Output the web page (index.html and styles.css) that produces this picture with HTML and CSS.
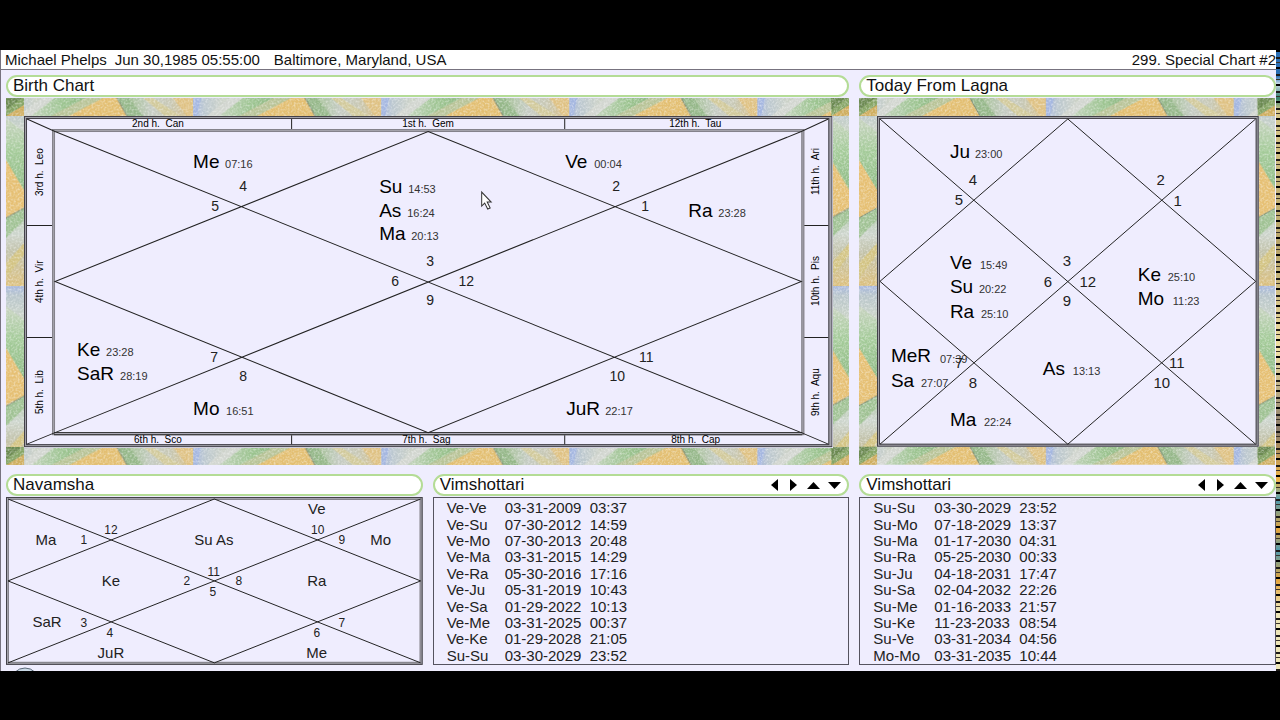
FILE: index.html
```html
<!DOCTYPE html>
<html lang="en">
<head>
<meta charset="utf-8">
<title>Michael Phelps - Birth Chart</title>
<link rel="stylesheet" href="styles.css">
</head>
<body>
<div class="app">
  <div class="main">
    <header class="topbar">
      <span>Michael Phelps</span>
      <span>Jun 30,1985 05:55:00</span>
      <span class="place">Baltimore, Maryland, USA</span>
      <span class="chart-no">299. Special Chart #2</span>
    </header>
    <main class="grid">
      <section class="panel wide">
        <h2 class="title">Birth Chart</h2>
        <svg class="chart" viewBox="6 98 843 367" role="img" aria-label="Birth chart">
          <defs>
            <linearGradient id="gh"><stop offset="0" stop-color="#a9b9de"/><stop offset=".06" stop-color="#bcc8d0"/><stop offset=".16" stop-color="#ccd2c8"/><stop offset=".3" stop-color="#a8c598"/><stop offset=".44" stop-color="#c2ca9a"/><stop offset=".64" stop-color="#a2c191"/><stop offset=".78" stop-color="#c6ccc4"/><stop offset=".88" stop-color="#c8c8b4"/><stop offset="1" stop-color="#dcbf80"/></linearGradient>
            <linearGradient id="gv" x2="0" y2="1"><stop offset="0" stop-color="#a9b9de"/><stop offset=".05" stop-color="#b9c6cc"/><stop offset=".17" stop-color="#cbd4c8"/><stop offset=".32" stop-color="#9bc08e"/><stop offset=".6" stop-color="#abc4a2"/><stop offset=".72" stop-color="#ced6ce"/><stop offset=".82" stop-color="#c2c2aa"/><stop offset="1" stop-color="#dcc07e"/></linearGradient>
            <linearGradient id="green" x2="0" y2="1"><stop offset="0" stop-color="#c9d4c2"/><stop offset=".45" stop-color="#a6cc9b"/><stop offset="1" stop-color="#8fbb86"/></linearGradient>
            <linearGradient id="band"><stop offset="0" stop-color="#c3d3bc"/><stop offset=".5" stop-color="#9cc490"/><stop offset="1" stop-color="#8ab27f"/></linearGradient>
            <filter id="grain" x="0" y="0" width="1" height="1" color-interpolation-filters="sRGB">
              <feTurbulence type="fractalNoise" baseFrequency=".5" numOctaves="2" result="n"/>
              <feColorMatrix in="n" type="matrix" values="0 0 0 0 1  0 0 0 0 1  0 0 0 0 1  1 0 0 0 -.4" result="w"/>
              <feComposite in="w" in2="SourceGraphic" operator="in" result="c"/>
              <feMerge><feMergeNode in="SourceGraphic"/><feMergeNode in="c"/></feMerge>
            </filter>
            <pattern id="tile-h" patternUnits="userSpaceOnUse" x="5" y="98" width="188" height="18">
              <rect width="188" height="18" fill="url(#gh)"/>
              <path d="M0 0H8L4 18H0Z" fill="#a5b7e0"/>
              <path d="M14 18 36 0H50L26 18Z" fill="#d2d6d0"/>
              <path d="M26 18 50 0H92L46 18Z" fill="url(#band)"/>
              <path d="M46 18 80 0H98L64 18Z" fill="#b9c498"/>
              <path d="M64 18 98 0H112L122 18Z" fill="#e3bf72"/>
              <path d="M112 0 122 18H138L124 0Z" fill="#96b88a"/>
              <path d="M112 0 122 18" stroke="#7a8876"/>
              <path d="M138 0 160 18H176L148 0Z" fill="#d2ca9c"/>
              <path d="M168 0 182 18H188V0Z" fill="#dfc284"/>
            </pattern>
            <pattern id="tile-v" patternUnits="userSpaceOnUse" x="6" y="98" width="18" height="188">
              <rect width="18" height="188" fill="url(#gv)"/>
              <path d="M0 20 18 34V92L0 62Z" fill="url(#green)"/>
              <path d="M0 62 18 92V110L0 120Z" fill="#e6c074"/>
              <path d="M0 120 18 110V122L0 140Z" fill="#a0c294"/>
              <path d="M0 120 18 110" stroke="#7f8e78"/>
              <path d="M0 165 18 145V157L0 180Z" fill="#d3c484"/>
            </pattern>
            <g id="corner"><path d="M6 98H24V116H6Z" fill="#86a566"/><path d="M6 116 24 105V116Z" fill="#cfae60"/><path d="M6 98H22L6 110Z" fill="#6c8a52"/></g>
            <g id="sides"><rect x="6" y="98" width="18" height="367" fill="url(#tile-v)"/></g>
          </defs>
          <g filter="url(#grain)">
            <use href="#sides"/><use href="#sides" x="825"/>
            <rect x="6" y="98" width="843" height="18" fill="url(#tile-h)"/>
            <g transform="translate(0 349)"><rect x="6" y="98" width="843" height="18" fill="url(#tile-h)"/></g>
            <use href="#corner"/><use href="#corner" x="825"/><use href="#corner" y="349"/><use href="#corner" x="825" y="349"/>
          </g>
          <rect class="field" x="24" y="116" width="808" height="331"/>
          <rect class="bevel" x="25.5" y="117.5" width="804" height="328"/>
          <rect class="edge" x="24.5" y="116.5" width="807" height="330"/>
          <rect class="edge" x="26.5" y="118.5" width="802" height="326"/>
          <rect class="bevel" x="53.5" y="130.5" width="749" height="303"/>
          <rect class="edge soft" x="54.5" y="131.5" width="747" height="301"/>
          <rect class="edge soft" x="52.5" y="129.5" width="751" height="305"/>
          <path class="gap" d="M55 433.5H802"/>
          <path class="line" d="M54 432.5H802M54 434.5H802"/>
          <path class="line" d="M291.5 119V129M564.5 119V129M291.5 435V444M564.5 435V444M27 225.5H52M27 337.5H52M804 225.5H828M804 337.5H828"/>
          <path class="line" d="M27 119 55 131.500 801 432.500 828 444M828 119 801 131.500 55 432.500 27 444M428 131.500 801 281.500 428 432.500 55 281.500Z"/>
          <g class="house">
            <text x="132" y="127">2nd h.&nbsp; Can</text><text x="402" y="127">1st h.&nbsp; Gem</text><text x="669" y="127">12th h.&nbsp; Tau</text>
            <text x="134" y="443">6th h.&nbsp; Sco</text><text x="402" y="443">7th h.&nbsp; Sag</text><text x="671" y="443">8th h.&nbsp; Cap</text>
            <text transform="translate(43 196) rotate(-90)">3rd h.&nbsp; Leo</text><text transform="translate(43 303) rotate(-90)">4th h.&nbsp; Vir</text><text transform="translate(43 414) rotate(-90)">5th h.&nbsp; Lib</text>
            <text transform="translate(819 195) rotate(-90)">11th h.&nbsp; Ari</text><text transform="translate(819 306) rotate(-90)">10th h.&nbsp; Pis</text><text transform="translate(819 416) rotate(-90)">9th h.&nbsp; Aqu</text>
          </g>
          <g class="planet">
            <text x="193" y="168">Me</text><text x="565" y="168">Ve</text><text x="379" y="193">Su</text><text x="379" y="217">As</text><text x="379" y="240">Ma</text><text x="688" y="217">Ra</text>
            <text x="77" y="356">Ke</text><text x="77" y="380">SaR</text><text x="193" y="415">Mo</text><text x="566" y="415">JuR</text>
          </g>
          <g class="degree">
            <text x="225" y="168">07:16</text><text x="594" y="168">00:04</text><text x="408" y="193">14:53</text><text x="407" y="217">16:24</text><text x="411" y="240">20:13</text><text x="718" y="217">23:28</text>
            <text x="106" y="356">23:28</text><text x="120" y="380">28:19</text><text x="226" y="415">16:51</text><text x="605" y="415">22:17</text>
          </g>
          <g class="sign">
            <text x="243" y="191">4</text><text x="215" y="211">5</text><text x="616" y="191">2</text><text x="645" y="211">1</text><text x="430" y="266">3</text><text x="395" y="286">6</text><text x="466" y="286">12</text><text x="430" y="305">9</text><text x="214" y="362">7</text><text x="243" y="381">8</text><text x="646" y="362">11</text><text x="617" y="381">10</text>
          </g>
          <path class="cursor" d="M481.500 192V206L484.500 203 487.500 209 490 208 487 202H491Z"/>
        </svg>
      </section>

      <section class="panel">
        <h2 class="title">Today From Lagna</h2>
        <svg class="chart" viewBox="859 98 417 367" role="img" aria-label="Today from Lagna chart">
          <g filter="url(#grain)">
            <use href="#sides" x="853"/><use href="#sides" x="1252"/>
            <g transform="translate(853 0)"><rect x="6" y="98" width="417" height="18" fill="url(#tile-h)"/></g>
            <g transform="translate(853 349)"><rect x="6" y="98" width="417" height="18" fill="url(#tile-h)"/></g>
            <use href="#corner" x="853"/><use href="#corner" x="1252"/><use href="#corner" x="853" y="349"/><use href="#corner" x="1252" y="349"/>
          </g>
          <rect class="field" x="877" y="116" width="382" height="331"/>
          <rect class="bevel" x="878.5" y="117.5" width="379" height="328"/>
          <rect class="edge" x="877.5" y="116.5" width="381" height="330"/>
          <rect class="edge" x="879.5" y="118.5" width="377" height="326"/>
          <path class="line" d="M880 119 1256 444.500M1256 119 880 444.500M1068 119 1256 281.500 1068 444.500 880 281.500Z"/>
          <g class="planet">
            <text x="950" y="158">Ju</text><text x="950" y="269">Ve</text><text x="950" y="293">Su</text><text x="950" y="318">Ra</text><text x="1138" y="281">Ke</text><text x="1138" y="305">Mo</text><text x="891" y="362">MeR</text><text x="891" y="387">Sa</text><text x="1043" y="375">As</text><text x="950" y="426">Ma</text>
          </g>
          <g class="degree">
            <text x="975" y="158">23:00</text><text x="980" y="269">15:49</text><text x="979" y="293">20:22</text><text x="981" y="318">25:10</text><text x="1168" y="281">25:10</text><text x="1173" y="305">11:23</text><text x="940" y="363">07:39</text><text x="921" y="387">27:07</text><text x="1073" y="375">13:13</text><text x="984" y="426">22:24</text>
          </g>
          <g class="sign large">
            <text x="973" y="185">4</text><text x="959" y="205">5</text><text x="1161" y="185">2</text><text x="1178" y="206">1</text><text x="1067" y="266">3</text><text x="1048" y="287">6</text><text x="1088" y="287">12</text><text x="1067" y="306">9</text><text x="959" y="368">7</text><text x="973" y="388">8</text><text x="1177" y="368">11</text><text x="1162" y="388">10</text>
          </g>
        </svg>
      </section>

      <section class="panel">
        <h2 class="title">Navamsha</h2>
        <svg class="chart" viewBox="6 497 417 168" role="img" aria-label="Navamsha chart">
          <rect class="bevel" x="7.5" y="498.500" width="414" height="165"/>
          <rect class="edge" x="6.5" y="497.500" width="416" height="167"/>
          <rect class="edge soft" x="8.5" y="499.500" width="412" height="163"/>
          <path class="line" d="M8 499 421 663M421 499 8 663M214.500 499 421 581 214.500 663 8 581Z"/>
          <g class="planet small">
            <text x="317" y="514">Ve</text><text x="46" y="545">Ma</text><text x="214" y="545">Su As</text><text x="381" y="545">Mo</text><text x="111" y="586">Ke</text><text x="317" y="586">Ra</text><text x="47" y="627">SaR</text><text x="111" y="658">JuR</text><text x="317" y="658">Me</text>
          </g>
          <g class="sign small">
            <text x="111" y="534">12</text><text x="84" y="544">1</text><text x="318" y="534">10</text><text x="342" y="544">9</text><text x="214" y="576">11</text><text x="187" y="585">2</text><text x="239" y="585">8</text><text x="213" y="596">5</text><text x="84" y="627">3</text><text x="110" y="637">4</text><text x="317" y="637">6</text><text x="342" y="627">7</text>
          </g>
        </svg>
      </section>

      <section class="panel">
        <div class="title"><h2>Vimshottari</h2>
          <div class="nav">
            <button aria-label="Previous"><svg width="7" height="12"><path d="M7 0V12L0 6Z"/></svg></button>
            <button aria-label="Next"><svg width="7" height="12"><path d="M0 0V12L7 6Z"/></svg></button>
            <button aria-label="Up"><svg width="13" height="7"><path d="M0 7H13L6.500 0Z"/></svg></button>
            <button aria-label="Down"><svg width="13" height="7"><path d="M0 0H13L6.500 7Z"/></svg></button>
          </div>
        </div>
        <div class="list">
          <table>
            <tr><td>Ve-Ve</td><td>03-31-2009</td><td>03:37</td></tr>
            <tr><td>Ve-Su</td><td>07-30-2012</td><td>14:59</td></tr>
            <tr><td>Ve-Mo</td><td>07-30-2013</td><td>20:48</td></tr>
            <tr><td>Ve-Ma</td><td>03-31-2015</td><td>14:29</td></tr>
            <tr><td>Ve-Ra</td><td>05-30-2016</td><td>17:16</td></tr>
            <tr><td>Ve-Ju</td><td>05-31-2019</td><td>10:43</td></tr>
            <tr><td>Ve-Sa</td><td>01-29-2022</td><td>10:13</td></tr>
            <tr><td>Ve-Me</td><td>03-31-2025</td><td>00:37</td></tr>
            <tr><td>Ve-Ke</td><td>01-29-2028</td><td>21:05</td></tr>
            <tr><td>Su-Su</td><td>03-30-2029</td><td>23:52</td></tr>
          </table>
        </div>
      </section>

      <section class="panel">
        <div class="title"><h2>Vimshottari</h2>
          <div class="nav">
            <button aria-label="Previous"><svg width="7" height="12"><path d="M7 0V12L0 6Z"/></svg></button>
            <button aria-label="Next"><svg width="7" height="12"><path d="M0 0V12L7 6Z"/></svg></button>
            <button aria-label="Up"><svg width="13" height="7"><path d="M0 7H13L6.500 0Z"/></svg></button>
            <button aria-label="Down"><svg width="13" height="7"><path d="M0 0H13L6.500 7Z"/></svg></button>
          </div>
        </div>
        <div class="list later">
          <table>
            <tr><td>Su-Su</td><td>03-30-2029</td><td>23:52</td></tr>
            <tr><td>Su-Mo</td><td>07-18-2029</td><td>13:37</td></tr>
            <tr><td>Su-Ma</td><td>01-17-2030</td><td>04:31</td></tr>
            <tr><td>Su-Ra</td><td>05-25-2030</td><td>00:33</td></tr>
            <tr><td>Su-Ju</td><td>04-18-2031</td><td>17:47</td></tr>
            <tr><td>Su-Sa</td><td>02-04-2032</td><td>22:26</td></tr>
            <tr><td>Su-Me</td><td>01-16-2033</td><td>21:57</td></tr>
            <tr><td>Su-Ke</td><td>11-23-2033</td><td>08:54</td></tr>
            <tr><td>Su-Ve</td><td>03-31-2034</td><td>04:56</td></tr>
            <tr><td>Mo-Mo</td><td>03-31-2035</td><td>10:44</td></tr>
          </table>
        </div>
      </section>
    </main>
    <footer class="foot"><svg width="30" height="6"><circle cx="15" cy="17" r="14" fill="#c9d9e6" stroke="#5b6878" stroke-width="1"/></svg></footer>
  </div>
  <div class="edge-strip"></div>
</div>
</body>
</html>
```
FILE: styles.css
```css
* { box-sizing: border-box; }
body {
  margin: 0;
  min-height: 100vh;
  padding: 50px 0 48px;
  background: #000;
  color: #111;
  font-family: "Liberation Sans", Arial, sans-serif;
  font-size: 15px;
}
.app { display: flex; background: #efedfe; }
.main { flex: 1; min-width: 0; border-left: 1px solid #77737f; }
.topbar {
  display: flex;
  gap: 8px;
  height: 20px;
  padding-left: 4px;
  line-height: 20px;
  background: #fff;
  border-bottom: 1px solid #77737f;
  white-space: nowrap;
}
.place { margin-left: 6px; }
.chart-no { margin-left: auto; }
.grid {
  display: grid;
  grid-template-columns: repeat(3, minmax(0, 1fr));
  gap: 9px 10px;
  padding: 5px 0 0 5px;
}
.panel { display: flex; flex-direction: column; gap: 1px; }
.wide { grid-column: span 2; }
.title {
  display: flex;
  align-items: center;
  justify-content: space-between;
  height: 22px;
  margin: 0;
  padding: 0 6px 0 5px;
  border: 2px solid #b4dc96;
  border-radius: 11px;
  background: #fff;
  font-size: 17px;
  font-weight: 400;
  line-height: 18px;
}
.title h2 { margin: 0; font: inherit; }
.nav { display: flex; align-items: center; gap: 10px; }
.nav button {
  display: flex;
  padding: 0;
  border: 0;
  background: none;
}
.nav button:nth-child(2) { margin: 0 0 0 2px; }
.nav button:nth-child(4) { margin-left: -2px; }
.chart { display: block; width: 100%; height: auto; }
.field { fill: #efedfe; }
.bevel { fill: none; stroke: #a3a2aa; stroke-width: 3; }
.edge { fill: none; stroke: #44424a; }
.soft { stroke: #85838c; }
.gap { fill: none; stroke: #efedfe; }
.line { fill: none; stroke: #222; }
.planet { font-size: 19px; }
.degree { font-size: 11px; fill: #333; }
.sign { font-size: 14px; text-anchor: middle; fill: #222; }
.large { font-size: 15px; }
.planet.small { font-size: 15px; text-anchor: middle; fill: #222; }
.sign.small { font-size: 12px; }
.house { font-size: 10px; }
.cursor { fill: #fff; stroke: #333; }
.list {
  flex: 1;
  display: flex;
  flex-direction: column;
  padding: 2px 0 0 13px;
  border: 1px solid #55535f;
}
.list table { flex: 1; width: 182px; border-collapse: collapse; table-layout: fixed; color: #222; }
.list td { padding: 0; line-height: 16px; white-space: nowrap; }
.list td:first-child { width: 58px; }
.list td:nth-child(2) { width: 85px; }
.list.later table { width: 185px; }
.list.later td:first-child { width: 61px; }
.foot { height: 6px; padding-left: 9px; }
.foot svg { display: block; }
.edge-strip {
  width: 4px;
  background:
    repeating-linear-gradient(#000 0 2px, transparent 2px 7px, #1d1a18 7px 9px, transparent 9px 12px, #3a332a 12px 13px, transparent 13px 17px),
    linear-gradient(#2b6fb5 0 26px, #cfe0ea 34px, #2f7d6a 48px, #d8c98a 60px, #b9a56a 200px, #f1e2a4 300px, #8a7a68 380px, #f2b74a 430px, #4e9ab0 450px, #e7a63c 480px, #4e9ab0 500px, #e7a63c 530px, #eee6b8 560px);
}
```
